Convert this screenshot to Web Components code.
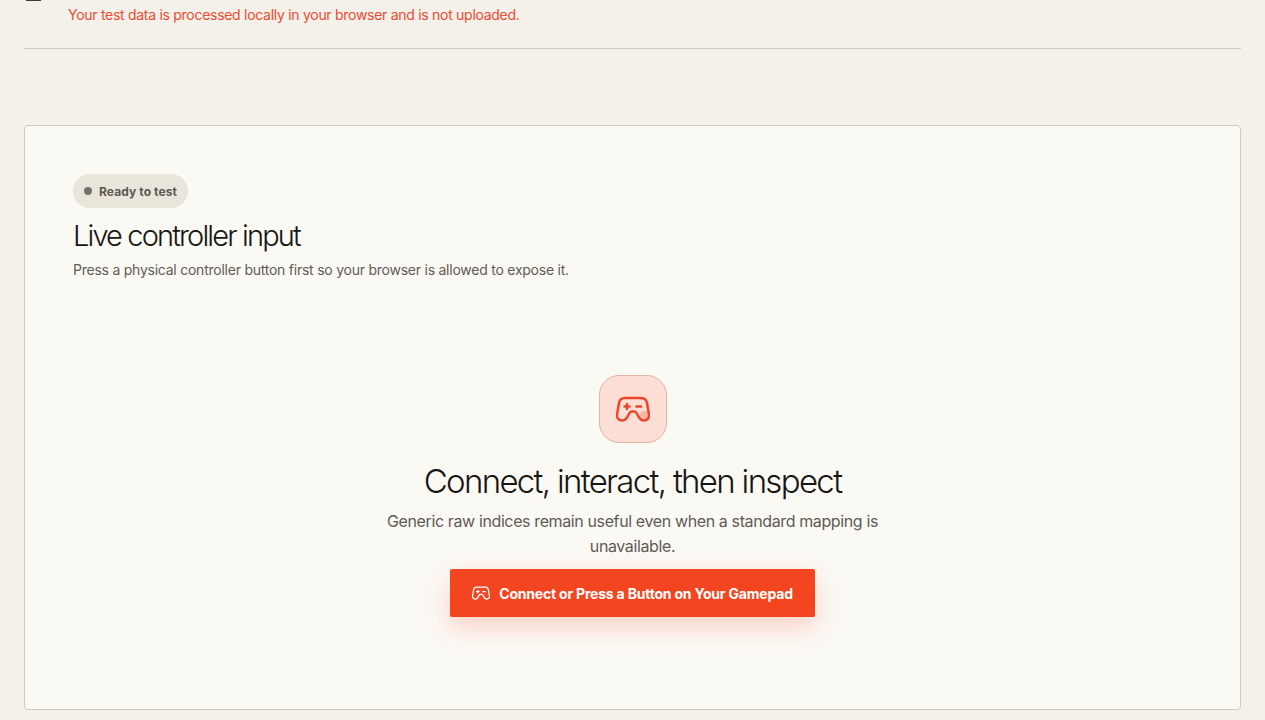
<!DOCTYPE html>
<html lang="en"><head><meta charset="utf-8"><title>Gamepad tester</title>
<style>
html,body{margin:0;padding:0;height:720px;overflow:hidden;background:#f4f1ea;font-family:Inter,"Liberation Sans",sans-serif}
</style></head><body>
<gt-page>
  <gt-notice slot="notice">Your test data is processed locally in your browser and is not uploaded.</gt-notice>
  <gt-panel slot="panel">
    <gt-pill slot="head">Ready to test</gt-pill>
    <h2 slot="head" style="margin:0">Live controller input</h2>
    <p slot="head" style="margin:0">Press a physical controller button first so your browser is allowed to expose it.</p>
    <gt-empty slot="body" title-text="Connect, interact, then inspect" text="Generic raw indices remain useful even when a standard mapping is unavailable." action="Connect or Press a Button on Your Gamepad"></gt-empty>
  </gt-panel>
</gt-page>
<script>
const pad = (w, h, sw, wedge) => `<svg width="${w}" height="${h}" viewBox="0 0 34 26" fill="none" stroke="currentColor" stroke-width="${sw}" stroke-linecap="round" stroke-linejoin="round" aria-hidden="true"><path d="M25.5 15.5 31 14.5 32.6 19.5C33 22.5 31 24.5 28 24.5 26 24.5 24.5 23.5 23 21.5Z" fill="${wedge}" stroke="none"/><path d="M8.5 10.5h5M11 8v5"/><path d="M20.5 10.5h4.5"/><path d="M9 2H25C28.5 2 30.5 4 31 7L33 18.5C33.5 22 31 24.5 28 24.5 26 24.5 24.5 23.5 23 21.5L20.500 17C20 16 19 15.500 18 15.500H16C15 15.500 14 16 13.500 17L11 21.5C9.500 23.500 8 24.500 6 24.500 3 24.500.5 22 1 18.500L3 7C3.500 4 5.500 2 9 2Z"/></svg>`;
function def(name, html, init){
  customElements.define(name, class extends HTMLElement{
    constructor(){super();this.attachShadow({mode:'open'}).innerHTML=html;}
    connectedCallback(){ if(init) init(this); }
  });
}
def('gt-page',`<style>
:host{display:block;padding:0 24px;margin-top:-17px}
.rule{border-bottom:1px solid #cfcbc2;padding-bottom:23px;margin-bottom:76px}
</style><div class="rule"><slot name="notice"></slot></div><slot name="panel"></slot>`);
def('gt-notice',`<style>
:host{display:flex;gap:27px;align-items:flex-start;color:#ee4a30;font-size:14px;line-height:20px;font-weight:400;letter-spacing:-.285px}
.ic{width:15px;flex:none;height:18px;margin-left:2px;box-sizing:border-box;border-bottom:2px solid #3c3a36}
.t{padding-top:22px}
</style><span class="ic"></span><span class="t"><slot></slot></span>`);
def('gt-panel',`<style>
:host{display:block;box-sizing:border-box;height:585px;background:#fbf9f4;border:1px solid #cfcbc2;border-radius:4px;padding:48px}
.head{display:flex;flex-direction:column;align-items:flex-start}
::slotted(h2){font-size:29px;line-height:36px;font-weight:300;letter-spacing:-1.86px;color:#171613;margin-top:10px !important}
::slotted(p){font-size:14px;line-height:20px;color:#5f5c56;letter-spacing:-.24px;margin-top:6px !important}
</style><div class="head"><slot name="head"></slot></div><slot name="body"></slot>`);
def('gt-pill',`<style>
:host{display:inline-flex;align-items:center;gap:7px;height:34px;box-sizing:border-box;padding:0 11px;background:#e9e5da;border-radius:17px;color:#5b5852;font-size:12px;font-weight:700;letter-spacing:.1px}
i{width:8px;height:8px;border-radius:50%;background:#75726c}
</style><i></i><span><slot></slot></span>`);
def('gt-empty',`<style>
:host{display:flex;flex-direction:column;align-items:center;margin-top:95px;text-align:center}
.tile{width:68px;height:68px;box-sizing:border-box;border:1px solid #e2b5a6;border-radius:20px;background:#fbdfd4;color:#f0452a;display:flex;align-items:center;justify-content:center}
h3{margin:16px 0 0;font-size:33px;line-height:44px;font-weight:300;letter-spacing:-1.68px;color:#171613}
p{margin:6px 0 0;width:500px;font-size:16px;line-height:25px;color:#5f5c56;letter-spacing:-.38px}
button{all:unset;box-sizing:border-box;margin-top:10px;height:48px;width:365px;display:flex;align-items:center;justify-content:center;gap:9px;background:#f44521;color:#fff;border-radius:2px;font-size:14px;font-weight:700;letter-spacing:-.2px;box-shadow:0 10px 24px rgba(246,69,33,.22)}
</style><div class="tile">${pad(34,26,2.5,'#f5b9a5')}</div><h3 id="t"></h3><p id="x"></p><button type="button">${pad(18,14,2.4,'none')}<span id="a"></span></button>`,
el=>{const s=el.shadowRoot;s.getElementById('t').textContent=el.getAttribute('title-text');s.getElementById('x').textContent=el.getAttribute('text');s.getElementById('a').textContent=el.getAttribute('action');});
</script></body></html>
